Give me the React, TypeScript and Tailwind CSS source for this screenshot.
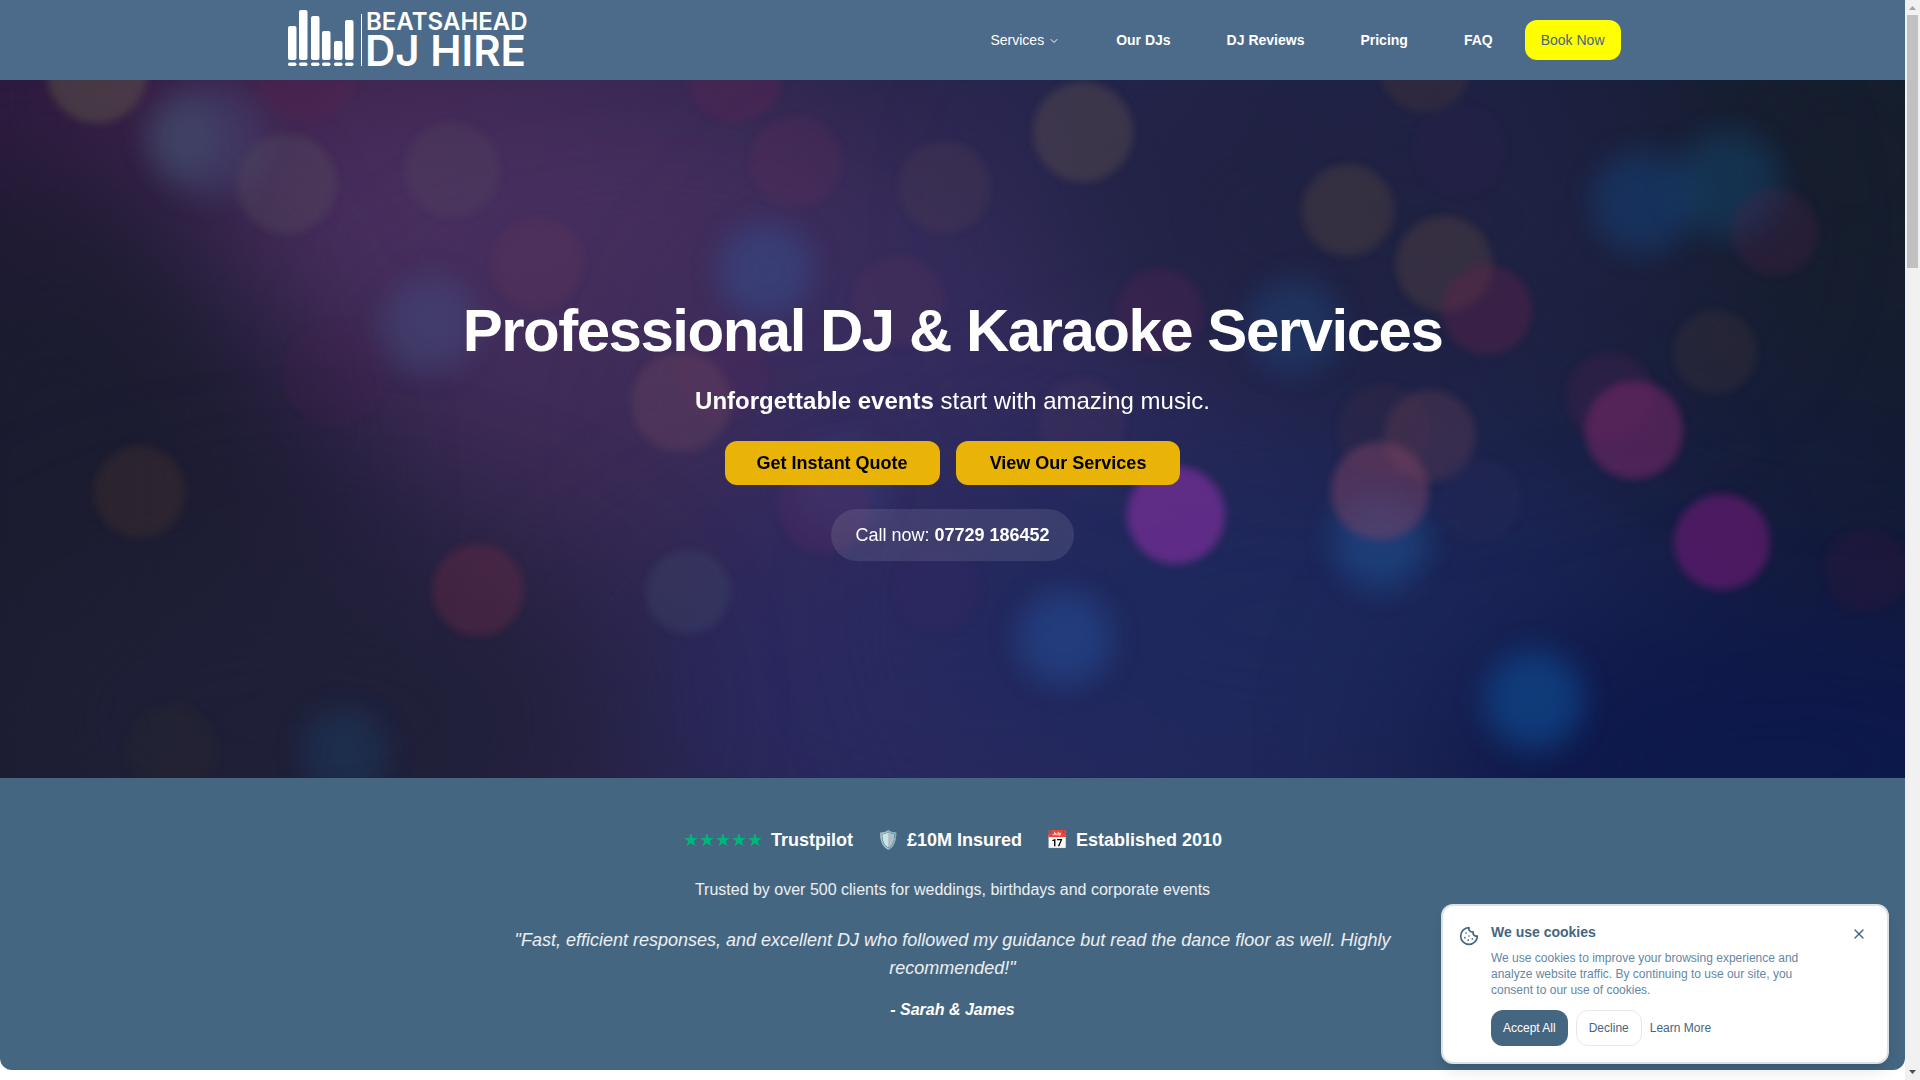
import { useState } from "react";
import { ChevronDown, Cookie, X } from "lucide-react";

const NAV_LINKS = ["Our DJs", "DJ Reviews", "Pricing", "FAQ"];

const BARS = [
  { x: 4, top: 18 },
  { x: 15, top: 2 },
  { x: 27, top: 8 },
  { x: 38, top: 23 },
  { x: 50, top: 33 },
  { x: 61, top: 12 },
];

// Wide colour washes behind the lights
const WASHES = [
  { x: 30, y: 40, rx: 190, ry: 120, color: "#321a42", opacity: 0.8 },
  { x: 290, y: 20, rx: 260, ry: 130, color: "#44234f", opacity: 0.8 },
  { x: 480, y: 160, rx: 320, ry: 160, color: "#4d3163", opacity: 0.9 },
  { x: 720, y: 230, rx: 300, ry: 200, color: "#453060", opacity: 0.7 },
  { x: 640, y: 380, rx: 240, ry: 180, color: "#3f2c57", opacity: 0.6 },
  { x: 1000, y: 370, rx: 280, ry: 240, color: "#352d60", opacity: 0.85 },
  { x: 980, y: 620, rx: 380, ry: 180, color: "#2a2a62", opacity: 0.9 },
  { x: 1300, y: 540, rx: 360, ry: 200, color: "#1c285c", opacity: 0.85 },
  { x: 1780, y: 680, rx: 340, ry: 160, color: "#0d184c", opacity: 1 },
  { x: 60, y: 420, rx: 220, ry: 320, color: "#1b1c30", opacity: 0.9 },
  { x: 300, y: 640, rx: 320, ry: 170, color: "#1f2038", opacity: 0.9 },
  { x: 1840, y: 80, rx: 240, ry: 220, color: "#161e2c", opacity: 0.9 },
  { x: 1380, y: 140, rx: 340, ry: 180, color: "#202242", opacity: 0.85 },
];

const LIGHTS = [
  { x: 97, y: -7, r: 50, color: "#64604a", opacity: 0.5, soft: false },
  { x: 185, y: 58, r: 36, color: "#4b6e78", opacity: 0.4, soft: true },
  { x: 208, y: 60, r: 58, color: "#45527c", opacity: 0.45, soft: true },
  { x: 306, y: -10, r: 52, color: "#64264e", opacity: 0.25, soft: false },
  { x: 287, y: 104, r: 50, color: "#5a5560", opacity: 0.36, soft: false },
  { x: 452, y: 90, r: 48, color: "#5a5060", opacity: 0.3, soft: false },
  { x: 538, y: 184, r: 46, color: "#6a3856", opacity: 0.3, soft: false },
  { x: 735, y: -6, r: 48, color: "#622656", opacity: 0.4, soft: false },
  { x: 796, y: 82, r: 46, color: "#62305a", opacity: 0.32, soft: false },
  { x: 945, y: 107, r: 46, color: "#514052", opacity: 0.36, soft: false },
  { x: 766, y: 190, r: 48, color: "#37508e", opacity: 0.6, soft: true },
  { x: 430, y: 244, r: 48, color: "#445082", opacity: 0.55, soft: true },
  { x: 335, y: 294, r: 52, color: "#4c2450", opacity: 0.2, soft: false },
  { x: 898, y: 222, r: 46, color: "#5b355d", opacity: 0.3, soft: false },
  { x: 722, y: 294, r: 46, color: "#622a60", opacity: 0.25, soft: false },
  { x: 681, y: 322, r: 50, color: "#714a5c", opacity: 0.4, soft: false },
  { x: 841, y: 405, r: 48, color: "#404a88", opacity: 0.4, soft: true },
  { x: 824, y: 428, r: 46, color: "#5a2a60", opacity: 0.35, soft: false },
  { x: 140, y: 412, r: 46, color: "#4b352e", opacity: 0.42, soft: false },
  { x: 478, y: 510, r: 46, color: "#722d49", opacity: 0.45, soft: false },
  { x: 688, y: 512, r: 42, color: "#404a6c", opacity: 0.45, soft: false },
  { x: 345, y: 672, r: 44, color: "#1b4670", opacity: 0.45, soft: true },
  { x: 172, y: 670, r: 46, color: "#30302c", opacity: 0.25, soft: false },
  { x: 1083, y: 52, r: 50, color: "#6a5950", opacity: 0.42, soft: false },
  { x: 1425, y: -14, r: 46, color: "#624438", opacity: 0.3, soft: false },
  { x: 1460, y: 70, r: 46, color: "#302452", opacity: 0.3, soft: false },
  { x: 1348, y: 130, r: 46, color: "#5b4a42", opacity: 0.42, soft: false },
  { x: 1444, y: 184, r: 48, color: "#5c4744", opacity: 0.46, soft: false },
  { x: 1487, y: 230, r: 45, color: "#72254f", opacity: 0.4, soft: false },
  { x: 1160, y: 232, r: 44, color: "#602456", opacity: 0.34, soft: false },
  { x: 1294, y: 246, r: 48, color: "#20508a", opacity: 0.45, soft: true },
  { x: 1643, y: 122, r: 52, color: "#135090", opacity: 0.45, soft: true },
  { x: 1728, y: 104, r: 54, color: "#12507a", opacity: 0.48, soft: true },
  { x: 1775, y: 152, r: 44, color: "#562350", opacity: 0.3, soft: false },
  { x: 1715, y: 272, r: 42, color: "#43383c", opacity: 0.38, soft: false },
  { x: 1610, y: 316, r: 44, color: "#512350", opacity: 0.36, soft: false },
  { x: 1383, y: 350, r: 46, color: "#4c3044", opacity: 0.26, soft: false },
  { x: 1430, y: 356, r: 46, color: "#684055", opacity: 0.44, soft: false },
  { x: 1634, y: 350, r: 49, color: "#7c286a", opacity: 0.65, soft: false },
  { x: 1380, y: 462, r: 48, color: "#215fa4", opacity: 0.5, soft: true },
  { x: 1380, y: 411, r: 49, color: "#8a4768", opacity: 0.52, soft: false },
  { x: 1480, y: 420, r: 42, color: "#30305a", opacity: 0.3, soft: false },
  { x: 1082, y: 342, r: 44, color: "#4d3860", opacity: 0.36, soft: false },
  { x: 1176, y: 435, r: 49, color: "#8530a0", opacity: 0.75, soft: false },
  { x: 1722, y: 462, r: 48, color: "#6e1c76", opacity: 0.74, soft: false },
  { x: 1866, y: 490, r: 42, color: "#341740", opacity: 0.4, soft: false },
  { x: 1065, y: 558, r: 48, color: "#27509a", opacity: 0.62, soft: true },
  { x: 1534, y: 620, r: 50, color: "#0f4a90", opacity: 0.8, soft: true },
  { x: 938, y: 510, r: 44, color: "#3a2864", opacity: 0.3, soft: false },
];

function Logo() {
  return (
    <a href="#home" aria-label="BeatsAhead DJ Hire">
      <svg viewBox="0 -8 252 80" className="h-20 w-[252px] fill-white" aria-hidden="true">
        {BARS.map((bar) => (
          <g key={bar.x}>
            <rect x={bar.x - 1} y={bar.top} width="8.5" height={52 - bar.top} rx="2" />
            <rect x={bar.x - 1} y="54.5" width="8.5" height="3.5" rx="1.7" />
          </g>
        ))}
        <rect x="76" y="6" width="1" height="52" />
        <text x="81" y="22" fontSize="24" fontWeight="600" fontFamily="Inter, sans-serif">
          BEATSAHEAD
        </text>
        <text x="80" y="58" fontSize="42" fontWeight="600" fontFamily="Inter, sans-serif">
          DJ HIRE
        </text>
      </svg>
    </a>
  );
}

function Header() {
  return (
    <header className="bg-[#4c6a89]">
      <div className="mx-auto flex h-20 max-w-[1400px] items-center justify-between px-8">
        <Logo />
        <nav className="flex items-center gap-4 text-sm text-white">
          <div className="flex items-center gap-6">
            <button type="button" className="flex items-center gap-1 px-4 py-2">
              Services
              <ChevronDown className="mt-0.5 size-3" />
            </button>
            {NAV_LINKS.map((link) => (
              <a key={link} href="#" className="px-4 py-2 font-bold">
                {link}
              </a>
            ))}
          </div>
          <a href="#book" className="flex h-10 items-center rounded-xl bg-[#ffff00] px-4 text-[#456680]">
            Book Now
          </a>
        </nav>
      </div>
    </header>
  );
}

function BokehBackdrop() {
  return (
    <svg
      viewBox="0 0 1905 698"
      preserveAspectRatio="xMidYMid slice"
      className="absolute inset-0 size-full"
      aria-hidden="true"
    >
      <defs>
        <linearGradient id="base" x1="0" x2="1" y1="0" y2="0">
          <stop offset="0" stopColor="#1d1b32" />
          <stop offset="0.3" stopColor="#2b2347" />
          <stop offset="0.55" stopColor="#27264f" />
          <stop offset="0.8" stopColor="#1b2145" />
          <stop offset="1" stopColor="#141b35" />
        </linearGradient>
        <filter id="wash" x="-80%" y="-120%" width="260%" height="340%" colorInterpolationFilters="sRGB">
          <feGaussianBlur stdDeviation="85" />
        </filter>
        <filter id="soft" x="-50%" y="-50%" width="200%" height="200%" colorInterpolationFilters="sRGB">
          <feGaussianBlur stdDeviation="15" />
        </filter>
        <filter id="crisp" x="-20%" y="-20%" width="140%" height="140%" colorInterpolationFilters="sRGB">
          <feGaussianBlur stdDeviation="4" />
        </filter>
      </defs>
      <rect width="1905" height="698" fill="url(#base)" />
      {WASHES.map((w, i) => (
        <ellipse
          key={i}
          cx={w.x}
          cy={w.y}
          rx={w.rx}
          ry={w.ry}
          fill={w.color}
          opacity={w.opacity}
          filter="url(#wash)"
        />
      ))}
      <g opacity="0.85">
        {LIGHTS.map((l, i) => (
          <circle
            key={i}
            cx={l.x}
            cy={l.y}
            r={l.r}
            fill={l.color}
            opacity={l.opacity}
            filter={l.soft ? "url(#soft)" : "url(#crisp)"}
          />
        ))}
      </g>
    </svg>
  );
}

function Hero() {
  return (
    <section className="relative flex min-h-[698px] items-center justify-center overflow-hidden bg-[#1d1b32]">
      <BokehBackdrop />
      <div className="relative flex flex-col items-center gap-6 px-4 pt-1 text-center text-white">
        <h1 className="text-6xl font-bold tracking-tight">Professional DJ &amp; Karaoke Services</h1>
        <p className="text-2xl">
          <strong>Unforgettable events</strong> start with amazing music.
        </p>
        <div className="flex gap-4 text-lg font-bold text-black">
          <a href="#quote" className="flex h-11 items-center rounded-xl bg-[#eab308] px-8">
            Get Instant Quote
          </a>
          <a href="#services" className="flex h-11 items-center rounded-xl bg-[#eab308] px-[34px]">
            View Our Services
          </a>
        </div>
        <p className="rounded-full bg-white/10 px-6 py-3 text-lg">
          Call now:{" "}
          <a href="tel:07729186452" className="font-bold">
            07729 186452
          </a>
        </p>
      </div>
    </section>
  );
}

function TrustSection() {
  return (
    <section className="flex flex-col items-center rounded-b-xl bg-[#456680] px-4 py-12 text-center text-white">
      <div className="flex items-center gap-6 text-lg font-bold">
        <div className="flex items-center gap-2">
          <span className="font-normal text-[#00b67a]">★★★★★</span>
          <span>Trustpilot</span>
        </div>
        <div className="flex items-center gap-2">
          <span>🛡️</span>
          <span>£10M Insured</span>
        </div>
        <div className="flex items-center gap-2">
          <span>📅</span>
          <span>Established 2010</span>
        </div>
      </div>
      <p className="mt-6 text-white/90">Trusted by over 500 clients for weddings, birthdays and corporate events</p>
      <blockquote className="mt-6 max-w-4xl italic">
        <p className="text-lg/7 text-white/90">
          "Fast, efficient responses, and excellent DJ who followed my guidance but read the dance floor as well. Highly
          recommended!"
        </p>
        <footer className="mt-4 font-bold">- Sarah &amp; James</footer>
      </blockquote>
    </section>
  );
}

function CookieBanner({ onClose }: { onClose: () => void }) {
  return (
    <div
      role="dialog"
      aria-labelledby="cookie-title"
      className="absolute right-4 bottom-4 flex w-md items-start gap-3 rounded-xl border-2 border-[#dae1e7] bg-white p-4 text-[#456680] shadow-lg"
    >
      <Cookie className="mt-1 size-5 shrink-0" />
      <div className="min-w-0 flex-1">
        <h2 id="cookie-title" className="text-sm font-bold">
          We use cookies
        </h2>
        <p className="mt-2 max-w-80 text-xs text-[#6487a5]">
          We use cookies to improve your browsing experience and analyze website traffic. By continuing to use our site,
          you consent to our use of cookies.
        </p>
        <div className="mt-3 flex items-center gap-2 text-xs">
          <button type="button" onClick={onClose} className="h-9 rounded-xl bg-[#456680] px-3 text-white">
            Accept All
          </button>
          <button type="button" onClick={onClose} className="h-9 rounded-xl border border-gray-200 px-3">
            Decline
          </button>
          <a href="#privacy">Learn More</a>
        </div>
      </div>
      <button type="button" aria-label="Close" onClick={onClose} className="p-1">
        <X className="size-4" />
      </button>
    </div>
  );
}

function ScrollRail() {
  return (
    <div className="flex w-[15px] shrink-0 flex-col items-center bg-[#f1f1f1]" aria-hidden="true">
      <svg viewBox="0 0 15 15" className="size-[15px]">
        <path d="M4 10h7L7.5 6z" fill="#a3a3a3" />
      </svg>
      <div className="h-[253px] w-[11px] bg-[#c1c1c1]" />
      <svg viewBox="0 0 15 15" className="mt-auto size-[15px]">
        <path d="M4 5h7L7.5 9z" fill="#505050" />
      </svg>
    </div>
  );
}

export default function App() {
  const [showCookies, setShowCookies] = useState(true);

  return (
    <div className="flex h-screen bg-white font-['Liberation_Sans',Arial,sans-serif]">
      <div className="relative min-w-0 flex-1 overflow-hidden">
        <Header />
        <main>
          <Hero />
          <TrustSection />
        </main>
        {showCookies && <CookieBanner onClose={() => setShowCookies(false)} />}
      </div>
      <ScrollRail />
    </div>
  );
}
